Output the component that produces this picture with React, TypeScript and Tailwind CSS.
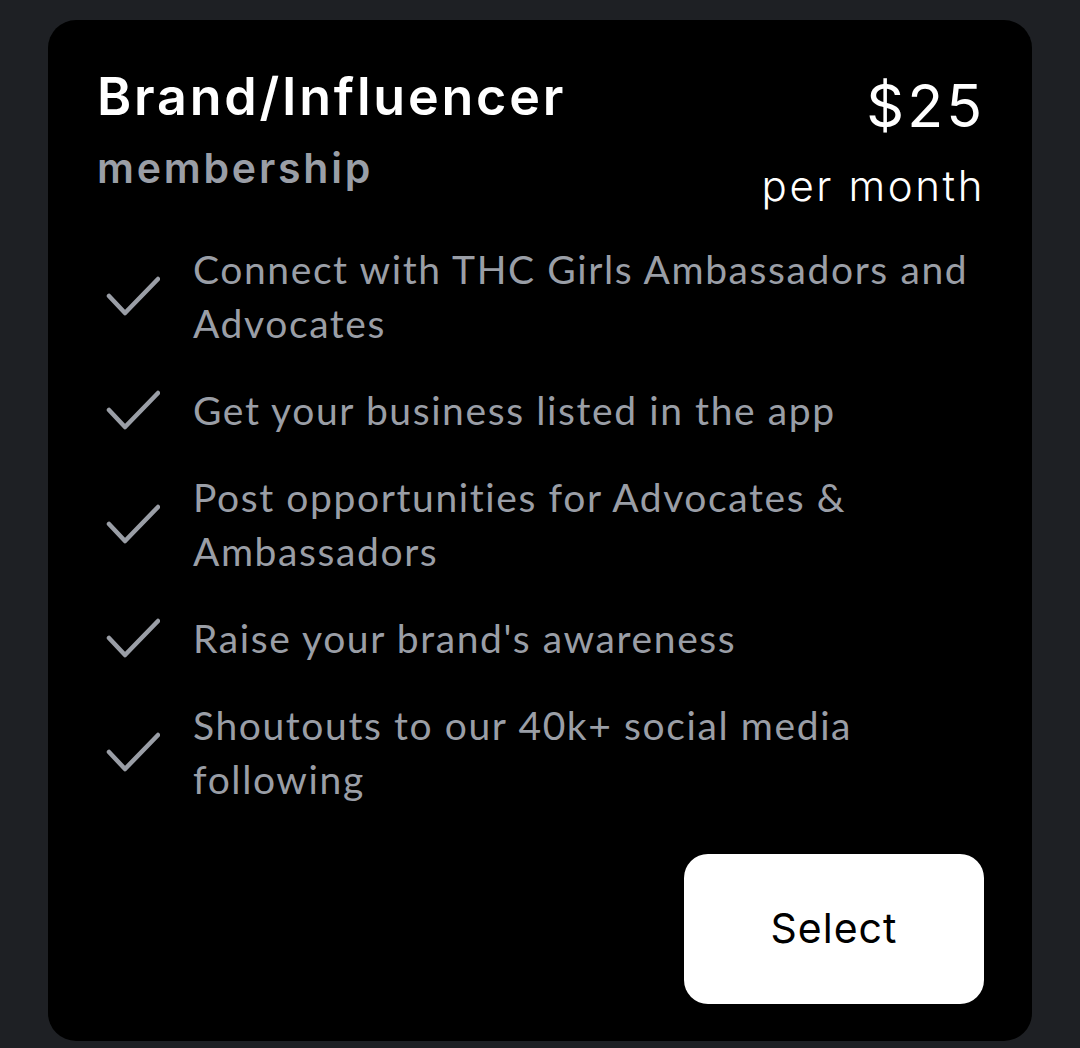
const features = [
  "Connect with THC Girls Ambassadors and Advocates",
  "Get your business listed in the app",
  "Post opportunities for Advocates & Ambassadors",
  "Raise your brand's awareness",
  "Shoutouts to our 40k+ social media following",
];

function CheckMark() {
  return (
    <svg width="54" height="40" viewBox="0 0 54 40" fill="none" className="shrink-0">
      <path d="M3 20 L19 37 L52 3" stroke="#9a9ea6" strokeWidth="4.5" strokeLinecap="round" strokeLinejoin="round" />
    </svg>
  );
}

export default function App() {
  return (
    <div className="min-h-screen bg-[#1e2024] px-[48px] pt-[20px] pb-[8px]">
      <div
        className="rounded-[28px] bg-black pl-[49px] pr-[50px] pt-[51px] pb-[37px]"
        style={{ fontFamily: "Inter, 'Noto Sans', sans-serif" }}
      >
        <div className="flex items-start justify-between">
          <div>
            <h1 className="text-[52px] font-semibold leading-[52px] tracking-[2.8px] text-white">Brand/Influencer</h1>
            <p className="mt-[25px] text-[41px] font-semibold leading-[41px] tracking-[2.8px] text-[#9a9ea6]">membership</p>
          </div>
          <div className="mt-[5px] mr-[-3px] flex flex-col items-end">
            <span className="text-[59px] font-normal leading-[60px] tracking-[3px] text-white">$25</span>
            <span className="mt-[29px] text-[42px] font-light leading-[42px] tracking-[2.6px] text-white">per month</span>
          </div>
        </div>

        <ul
          className="mt-[35px] flex flex-col gap-[33px] pl-[9px]"
          style={{ fontFamily: "Lato, 'Noto Sans', sans-serif" }}
        >
          {features.map((f) => (
            <li key={f} className="flex items-center gap-[33px]">
              <CheckMark />
              <span className="max-w-[789px] text-[39px] leading-[54px] tracking-[1.6px] text-[#9a9ea6]">{f}</span>
            </li>
          ))}
        </ul>

        <div className="mt-[48px] mr-[-2px] flex justify-end">
          <button className="h-[150px] w-[300px] rounded-[24px] bg-white text-[41px] font-normal tracking-[1px] text-black">
            Select
          </button>
        </div>
      </div>
    </div>
  );
}
